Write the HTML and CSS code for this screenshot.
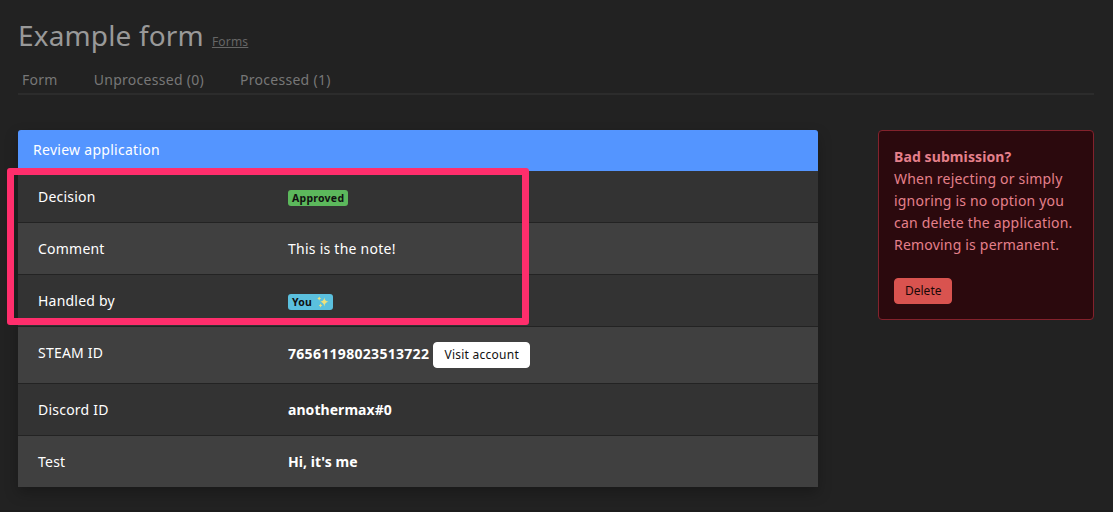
FILE: index.html
```html
<!DOCTYPE html>
<html lang="en">
<head>
<meta charset="utf-8">
<title>Example form</title>
<link rel="stylesheet" href="styles.css">
</head>
<body>
<main class="page">
  <header class="heading">
    <h1 class="title">Example form</h1>
    <a class="crumb" href="#">Forms</a>
  </header>
  <nav class="tabs">
    <a class="tab">Form</a>
    <a class="tab">Unprocessed (0)</a>
    <a class="tab">Processed (1)</a>
  </nav>
  <div class="columns">
    <section class="panel">
      <div class="panel-head">Review application</div>
      <div class="row"><span class="label">Decision</span><span class="badge badge-ok">Approved</span></div>
      <div class="row"><span class="label">Comment</span><span class="note">This is the note!</span></div>
      <div class="row"><span class="label">Handled by</span><span class="badge badge-info">You
        <svg class="sparkles" viewBox="0 0 12 12"><path fill="#efe27c" d="M7.3 1.5Q7.8 5.3 11.5 5.8Q7.8 6.3 7.3 10.5Q6.8 6.3 3.2 5.8Q6.8 5.3 7.3 1.5ZM2.2.5Q2.5 2.2 4.2 2.5Q2.5 2.8 2.2 4.6Q1.9 2.8.3 2.5Q1.9 2.2 2.2.5ZM3.5 7.5Q3.8 9.2 5.3 9.5Q3.8 9.8 3.5 11.5Q3.2 9.8 1.8 9.5Q3.2 9.2 3.5 7.5Z"/></svg></span></div>
      <div class="row row-tall"><span class="label">STEAM ID</span><b class="value value-id">76561198023513722</b><button class="btn btn-light">Visit account</button></div>
      <div class="row"><span class="label">Discord ID</span><b class="value">anothermax#0</b></div>
      <div class="row"><span class="label">Test</span><b class="value">Hi, it's me</b></div>
      <div class="highlight"></div>
    </section>
    <aside class="danger">
      <strong class="danger-title">Bad submission?</strong>
      <p class="danger-text">When rejecting or simply ignoring is no option you can delete the application. Removing is permanent.</p>
      <button class="btn btn-danger">Delete</button>
    </aside>
  </div>
</main>
</body>
</html>
```
FILE: styles.css
```css
* { box-sizing: border-box; }
body {
  margin: 0;
  height: 512px;
  overflow: hidden;
  background: #222;
  border-bottom: 2px solid #1c1c1c;
  color: #fff;
  font: 14px/22px "Noto Sans", sans-serif;
}
.page { padding: 15px 19px 0 18px; }
.heading { display: flex; align-items: baseline; height: 41px; }
.title { margin: 0 8px 0 0; font-size: 28px; line-height: 40px; font-weight: 400; letter-spacing: .15px; color: #999; }
.crumb { font-size: 12px; letter-spacing: .2px; color: #666; }
.tabs {
  display: flex;
  gap: 36px;
  height: 39px;
  padding: 13px 4px 0;
  border-bottom: 2px solid #2c2c2c;
  color: #777;
  letter-spacing: .28px;
}
.columns { display: flex; justify-content: space-between; align-items: flex-start; margin-top: 35px; }
.panel {
  position: relative;
  width: 800px;
  border-radius: 3px 3px 0 0;
  box-shadow: 0 6px 14px rgba(0, 0, 0, .25);
}
.panel-head {
  height: 41px;
  padding: 9px 15px;
  border-radius: 3px 3px 0 0;
  background: #5495ff;
  letter-spacing: .28px;
}
.row {
  display: flex;
  align-items: flex-start;
  height: 52px;
  padding: 15px 20px;
  background: #333;
  border-bottom: 1px solid #232323;
}
.row:nth-child(odd) { background: #404040; }
.row-tall { height: 57px; }
.row:nth-child(7) { height: 51px; border-bottom: 0; }
.label { width: 250px; letter-spacing: .22px; }
.note { letter-spacing: .25px; }
.value { font-weight: 700; letter-spacing: .05px; }
.value-id { letter-spacing: .3px; }
.row-tall .value { margin-top: 1px; }
.badge {
  display: flex;
  align-items: center;
  height: 16px;
  margin-top: 4px;
  padding: 0 4px;
  border-radius: 3px;
  color: #111;
  font-size: 10.5px;
  line-height: 16px;
  font-weight: 700;
  letter-spacing: .25px;
}
.badge-ok { background: #5cb85c; }
.badge-info { background: #5bc0de; }
.sparkles { width: 12px; height: 12px; margin-left: 5px; }
.btn {
  height: 26px;
  padding: 0 10px;
  border: 1px solid;
  border-radius: 4px;
  font: 12px/22px "Noto Sans", sans-serif;
}
.btn-light { width: 97px; margin-left: 4px; padding: 0; background: #fff; border-color: #fff; color: #111; letter-spacing: .25px; }
.btn-danger { width: 58px; background: #d9534f; border-color: #d9534f; color: #1a0808; }
.danger {
  width: 216px;
  height: 190px;
  padding: 15px 14px 0 15px;
  border: 1px solid #83222c;
  border-radius: 4px;
  background: #2b090d;
  color: #e5808b;
  letter-spacing: .2px;
}
.danger-title { display: block; letter-spacing: .1px; }
.danger-text { margin: 0 0 22px; }
.highlight {
  position: absolute;
  left: -11px;
  top: 38px;
  width: 522px;
  height: 157px;
  border: 7px solid #ff2e6c;
  border-radius: 3px;
}
```
